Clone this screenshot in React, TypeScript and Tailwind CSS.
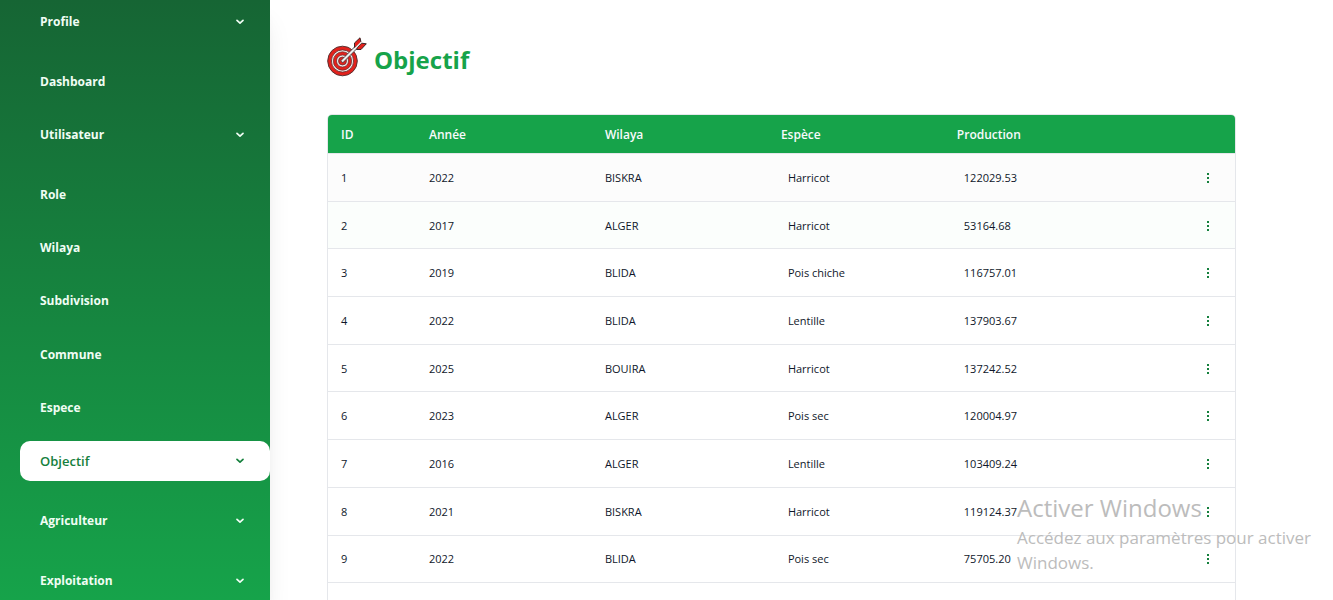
import React from "react";

type NavItem = { label: string; expandable?: boolean; active?: boolean };

const topItems: NavItem[] = [{ label: "Profile", expandable: true }, { label: "Dashboard" }, { label: "Utilisateur", expandable: true }];

const plainItems: NavItem[] = [
  { label: "Role" },
  { label: "Wilaya" },
  { label: "Subdivision" },
  { label: "Commune" },
  { label: "Espece" },
];

const bottomItems: NavItem[] = [
  { label: "Objectif", expandable: true, active: true },
  { label: "Agriculteur", expandable: true },
  { label: "Exploitation", expandable: true },
];

type Row = { id: number; annee: number; wilaya: string; espece: string; production: string };

const rows: Row[] = [
  { id: 1, annee: 2022, wilaya: "BISKRA", espece: "Harricot", production: "122029.53" },
  { id: 2, annee: 2017, wilaya: "ALGER", espece: "Harricot", production: "53164.68" },
  { id: 3, annee: 2019, wilaya: "BLIDA", espece: "Pois chiche", production: "116757.01" },
  { id: 4, annee: 2022, wilaya: "BLIDA", espece: "Lentille", production: "137903.67" },
  { id: 5, annee: 2025, wilaya: "BOUIRA", espece: "Harricot", production: "137242.52" },
  { id: 6, annee: 2023, wilaya: "ALGER", espece: "Pois sec", production: "120004.97" },
  { id: 7, annee: 2016, wilaya: "ALGER", espece: "Lentille", production: "103409.24" },
  { id: 8, annee: 2021, wilaya: "BISKRA", espece: "Harricot", production: "119124.37" },
  { id: 9, annee: 2022, wilaya: "BLIDA", espece: "Pois sec", production: "75705.20" },
];

function Chevron() {
  return (
    <svg viewBox="0 0 8 6" className="h-1.5 w-2" fill="none" stroke="currentColor" strokeWidth="1.7" aria-hidden="true">
      <path d="M1 1.3 4 4.1 7 1.3" strokeLinecap="round" strokeLinejoin="round" />
    </svg>
  );
}

function Dots() {
  return (
    <svg viewBox="0 0 2 10" className="h-2.5 w-0.5" fill="currentColor" aria-hidden="true">
      <rect width="2" height="2" />
      <rect y="4" width="2" height="2" />
      <rect y="8" width="2" height="2" />
    </svg>
  );
}

function Target() {
  return (
    <svg viewBox="0 0 40 40" className="size-10 shrink-0" aria-hidden="true">
      <circle cx="15.5" cy="24" r="14.8" fill="#e3211c" stroke="#5a3434" strokeWidth="1" />
      <circle cx="15.5" cy="24" r="11.1" fill="#f4eeee" stroke="#5a2f2f" strokeWidth=".8" />
      <circle cx="15.5" cy="24" r="9.2" fill="#e3211c" stroke="#5a2f2f" strokeWidth=".7" />
      <circle cx="15.5" cy="24" r="6" fill="#f4eeee" stroke="#5a2f2f" strokeWidth=".7" />
      <circle cx="15.5" cy="24" r="4" fill="#e3211c" stroke="#5a2f2f" strokeWidth=".7" />
      <path d="M14.5 25 31 8.5" stroke="#554848" strokeWidth="3.6" />
      <path d="M15 24.5 32 7.5" stroke="#f1eeee" strokeWidth="2.2" />
      <path d="M27.5 10.5V6L33 .8l1 4.5L30 9.5Z" fill="#e3211c" stroke="#3d2424" strokeWidth="1" strokeLinejoin="round" />
      <path d="M29.5 12.5H34L39.3 6.8l-4.6-.6L30.5 10.5Z" fill="#e3211c" stroke="#3d2424" strokeWidth="1" strokeLinejoin="round" />
      <path d="M28 11.5 34.5 5" stroke="#f1eeee" strokeWidth="1.2" />
    </svg>
  );
}

function NavEntry({ item }: { item: NavItem }) {
  const base = "flex h-10 w-full items-center justify-between rounded-[10px] pl-5 pr-[26px] text-left leading-5";
  const tone = item.active ? "bg-white text-[13px] font-semibold text-[#15803d]" : "text-xs font-bold text-[#f0fdf4]";
  if (item.expandable) {
    return (
      <button type="button" className={`${base} ${tone}`}>
        {item.label}
        <Chevron />
      </button>
    );
  }
  return (
    <a href="#" className={`${base} ${tone}`}>
      {item.label}
    </a>
  );
}

export default function App() {
  const cell = "px-[13px] text-left";
  return (
    <div className="relative flex h-screen overflow-hidden bg-white font-['Open_Sans','Noto_Sans',sans-serif] text-[#0f172a]">
      <nav className="w-[270px] shrink-0 bg-[linear-gradient(180deg,#166534,#16a34a)] pl-5 pt-0.5 shadow-[0_20px_25px_-5px_rgba(0,0,0,0.1),0_8px_10px_-6px_rgba(0,0,0,0.1)]">
        <ul>
          {topItems.map((item) => (
            <li key={item.label} className={item.expandable ? "pb-5" : "pb-[13px]"}>
              <NavEntry item={item} />
            </li>
          ))}
        </ul>
        <ul className="grid min-h-[266px] auto-rows-fr">
          {plainItems.map((item) => (
            <li key={item.label}>
              <NavEntry item={item} />
            </li>
          ))}
        </ul>
        <ul>
          {bottomItems.map((item) => (
            <li key={item.label} className="pb-5">
              <NavEntry item={item} />
            </li>
          ))}
        </ul>
      </nav>

      <main className="min-w-0 flex-1 pl-[57px] pr-[97px] pt-[37px]">
        <header className="flex items-center gap-[7px]">
          <Target />
          <h1 className="pt-1.5 text-2xl font-bold leading-8 text-[#16a34a]">Objectif</h1>
        </header>

        <div className="mt-[37px] overflow-hidden rounded-[5px] border border-[#e5e7eb]">
          <table className="h-[516px] w-full table-fixed border-separate border-spacing-0">
            <colgroup>
              <col className="w-[9.7%]" />
              <col className="w-[19.4%]" />
              <col className="w-[19.4%]" />
              <col className="w-[19.4%]" />
              <col className="w-[19.4%]" />
              <col />
            </colgroup>
            <thead>
              <tr className="h-[39px] bg-[#16a34a] text-xs text-[#f8fafc] *:border-b *:border-[#e5e7eb]">
                <th className={`${cell} pt-0.5 font-semibold`}>ID</th>
                <th className={`${cell} pt-0.5 font-semibold`}>Année</th>
                <th className={`${cell} pt-0.5 font-semibold`}>Wilaya</th>
                <th className={`${cell} pt-0.5 font-semibold`}>Espèce</th>
                <th className={`${cell} pt-0.5 font-semibold`}>Production</th>
                <th aria-label="Actions" />
              </tr>
            </thead>
            <tbody className="text-[11px] leading-5">
              {rows.map((row) => (
                <tr key={row.id} className="first:bg-[#fcfcfc] nth-2:bg-[#fbfefc] *:border-b *:border-[#e5e7eb] *:pt-px">
                  <td className={cell}>{row.id}</td>
                  <td className={cell}>{row.annee}</td>
                  <td className={cell}>{row.wilaya}</td>
                  <td className="pl-5 pr-2">{row.espece}</td>
                  <td className="pl-5 pr-2">{row.production}</td>
                  <td className="pr-[21px]">
                    <button type="button" aria-label={`Actions ${row.id}`} className="ml-auto flex size-3 items-center justify-center text-[#15803d]">
                      <Dots />
                    </button>
                  </td>
                </tr>
              ))}
              <tr>
                <td colSpan={6}>
                  <div className="h-[22px]" />
                </td>
              </tr>
            </tbody>
          </table>
        </div>
      </main>

      <aside className="pointer-events-none absolute bottom-[25px] right-[14px] w-[302px] text-[#bcbcbc]">
        <p className="text-2xl leading-8">Activer Windows</p>
        <p className="mt-px text-[17px] leading-[25px]">Accédez aux paramètres pour activer Windows.</p>
      </aside>
    </div>
  );
}
